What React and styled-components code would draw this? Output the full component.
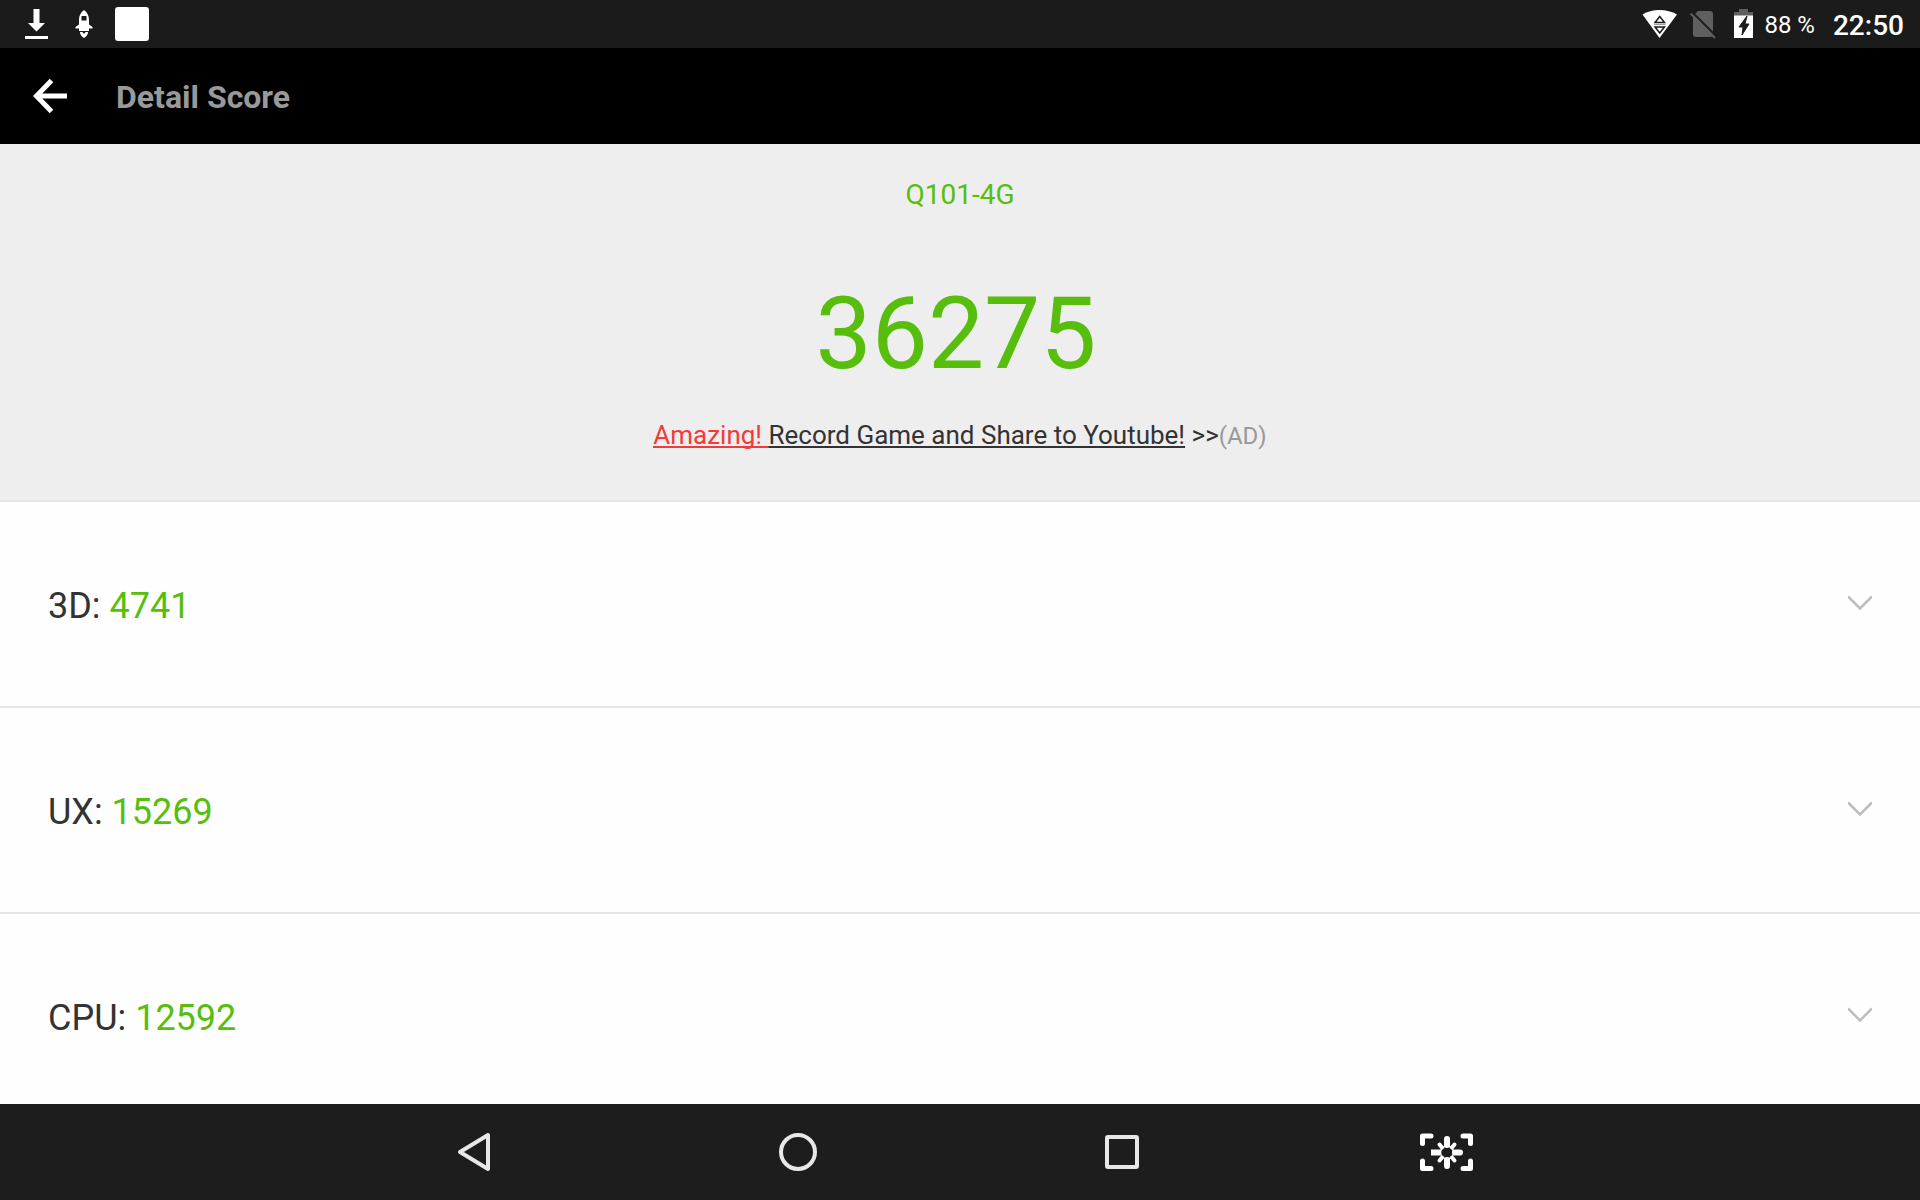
import React, { useState } from "react";
import styled, { createGlobalStyle } from "styled-components";

const GlobalStyle = createGlobalStyle`
  *, *::before, *::after { box-sizing: border-box; }
  body {
    margin: 0;
    background: #fefefe;
    font-family: Roboto, "Noto Sans", sans-serif;
    color: #333333;
  }
`;

const Screen = styled.div`
  display: flex;
  flex-direction: column;
  height: 100vh;
  overflow: hidden;
`;

const StatusBar = styled.div`
  display: flex;
  flex: none;
  align-items: center;
  justify-content: space-between;
  height: 48px;
  padding: 0 16px 0 24px;
  background: #1b1b1b;
  color: #ffffff;
`;

const StatusGroup = styled.div`
  display: flex;
  align-items: center;
  gap: ${(p) => p.$gap}px;
`;

const Glyph = styled.svg`
  display: block;
  flex: none;
`;

const Battery = styled.span`
  padding-top: 2px;
  font-size: 24px;
  line-height: 44px;
`;

const Clock = styled.time`
  margin-left: 8px;
  padding-top: 4px;
  font-size: 28px;
  font-weight: 500;
  line-height: 44px;
`;

const AppBar = styled.header`
  display: flex;
  flex: none;
  align-items: center;
  gap: 32px;
  height: 96px;
  padding: 0 16px;
  background: #000000;
`;

const IconButton = styled.button`
  display: flex;
  align-items: center;
  justify-content: center;
  width: 68px;
  height: 68px;
  padding: 0;
  border: 0;
  background: transparent;
  cursor: pointer;
`;

const Title = styled.h1`
  margin: 0;
  padding-top: 2px;
  font-size: 32px;
  font-weight: 700;
  line-height: 40px;
  color: #999999;
`;

const Content = styled.main`
  flex: 1;
  min-height: 0;
  overflow: hidden;
`;

const Summary = styled.section`
  display: flex;
  flex-direction: column;
  align-items: center;
  padding: 32px 24px 48px;
  border-bottom: 2px solid #e5e5e5;
  background: #eeeeee;
`;

const Model = styled.h2`
  margin: 0;
  font-size: 28px;
  font-weight: 400;
  line-height: 38px;
  color: #57be0d;
`;

const Total = styled.output`
  margin: 62px 0 26px;
  padding-right: 8px;
  font-size: 100px;
  line-height: 116px;
  color: #57be0d;
`;

const Promo = styled.p`
  margin: 0;
  font-size: 26px;
  line-height: 34px;
`;

const PromoLink = styled.a`
  color: #333333;
  text-decoration: underline;
  text-decoration-thickness: 2px;
  text-underline-offset: 2px;
  text-decoration-skip-ink: none;
`;

const Hot = styled.span`
  color: #f43a3a;
  text-decoration: inherit;
`;

const AdTag = styled.small`
  font-size: 24px;
  line-height: 1;
  color: #999999;
`;

const ScoreRow = styled.button`
  display: flex;
  align-items: center;
  justify-content: space-between;
  width: 100%;
  height: 206px;
  padding: 0 48px;
  border: 0;
  border-bottom: 2px solid #e5e5e5;
  background: #fefefe;
  color: #333333;
  font-family: inherit;
  font-size: 36px;
  line-height: 44px;
  text-align: left;
  cursor: pointer;
`;

const Label = styled.span`
  padding-top: 4px;
`;

const Value = styled.span`
  color: #57be0d;
`;

const NavBar = styled.nav`
  display: flex;
  flex: none;
  align-items: center;
  justify-content: center;
  gap: 256px;
  height: 96px;
  background: #1d1d1d;
`;

const scores = [
  { name: "3D", value: 4741 },
  { name: "UX", value: 15269 },
  { name: "CPU", value: 12592 },
];

function DownloadIcon() {
  return (
    <Glyph width="28" height="32" viewBox="0 0 28 32" fill="#fff" aria-hidden="true">
      <path d="M9.500 1h6v14h5.500L12.500 23.500 4 15h5.500zM1 28h23v3H1z" />
    </Glyph>
  );
}

function RocketIcon() {
  return (
    <Glyph width="19" height="32" viewBox="0 0 19 32" aria-hidden="true">
      <path
        d="M10 2C6.500 4.500 5 8 5 12v4.500L1.500 19v1.500H5V23h10v-2.500h3.500V19L15 16.500V12c0-4-1.500-7.500-5-10zM7.500 8h5v4.500h-5z"
        fill="#fff"
        fillRule="evenodd"
      />
      <path d="M6 24h2.500q1.500 3 3 0H14q0 3.500-4 6-4-2.500-4-6z" fill="#fff" />
    </Glyph>
  );
}

function BlankAppIcon() {
  return (
    <Glyph width="34" height="34" viewBox="0 0 34 34" aria-hidden="true">
      <rect width="34" height="34" rx="3" fill="#fff" />
    </Glyph>
  );
}

function WifiIcon() {
  return (
    <Glyph width="38" height="32" viewBox="0 0 38 32" aria-hidden="true">
      <path d="M.5 6.500C5 3.500 11 2 17.500 2s12.500 1.500 17.500 4.500L17.500 30z" fill="#fff" />
      <path d="M13 14.500h9.500L17.750 8.500zM13 19h9.500l-4.750 6z" fill="none" stroke="#1b1b1b" strokeWidth="1.500" />
      <path d="M12 16.500h11.500" stroke="#999" />
    </Glyph>
  );
}

function NoSimIcon() {
  return (
    <Glyph width="34" height="32" viewBox="0 0 34 32" aria-hidden="true">
      <path d="M3 8 8 3h12q3 0 3 3v20q0 3-3 3H6q-3 0-3-3z" fill="#5f5f5f" />
      <path d="M2 4 27 29" stroke="#1b1b1b" strokeWidth="2" />
      <path d="M.5 5.500 25 30" stroke="#5f5f5f" strokeWidth="2" />
    </Glyph>
  );
}

function BatteryIcon() {
  return (
    <Glyph width="20" height="32" viewBox="0 0 20 32" aria-hidden="true">
      <path d="M5 1h9v3h5v4H0V4h5z" fill="#5f5f5f" />
      <path d="M0 7.500h19V30H0z" fill="#fff" />
      <path d="M13 8 5 19h4L8 27l7-11h-4z" fill="#1b1b1b" stroke="#1b1b1b" />
    </Glyph>
  );
}

function ArrowBackIcon() {
  return (
    <Glyph width="36" height="36" viewBox="0 0 36 36" aria-hidden="true">
      <path d="M19.500 2.500 4.500 18l15 15.500M5 18h30" fill="none" stroke="#fff" strokeWidth="5" />
    </Glyph>
  );
}

function ChevronIcon() {
  return (
    <Glyph width="24" height="18" viewBox="0 0 24 18" aria-hidden="true">
      <path d="m0 1.500 12 12 12-12" fill="none" stroke="#bdbdbd" strokeWidth="2.500" />
    </Glyph>
  );
}

function NavBackIcon() {
  return (
    <Glyph width="40" height="40" viewBox="0 0 40 40" aria-hidden="true">
      <path d="M34 3v34L6 20z" fill="none" stroke="#e8e8e8" strokeWidth="4" strokeLinejoin="round" />
    </Glyph>
  );
}

function NavHomeIcon() {
  return (
    <Glyph width="40" height="40" viewBox="0 0 40 40" aria-hidden="true">
      <circle cx="20" cy="20" r="17" fill="none" stroke="#e8e8e8" strokeWidth="4" />
    </Glyph>
  );
}

function NavRecentIcon() {
  return (
    <Glyph width="40" height="40" viewBox="0 0 40 40" aria-hidden="true">
      <rect x="5" y="5" width="30" height="30" rx="1" fill="none" stroke="#e8e8e8" strokeWidth="4" />
    </Glyph>
  );
}

function NavCaptureIcon() {
  return (
    <Glyph width="56" height="40" viewBox="-1 0 56 40" aria-hidden="true">
      <g fill="none" stroke="#fff" strokeLinecap="round" strokeLinejoin="round">
        <path
          d="M3.500 11.500V4H12M44 4h7.500v7.500M51.500 29v7.500H44M12 36.500H3.500V29"
          strokeWidth="5"
        />
        <path d="M28 7v6M28 28v6M36 20.500h5" strokeWidth="6" />
        <path d="M12 20.500h9" strokeWidth="6" strokeLinecap="butt" />
        <path d="m20.500 12.500 2.500 3M35.500 12.500l-2.500 3M20.500 28.500l2.500-3M35.500 28.500l-2.500-3" strokeWidth="4" />
        <circle cx="28" cy="20.500" r="6.500" strokeWidth="1.500" />
      </g>
    </Glyph>
  );
}

export default function App() {
  const [selected, setSelected] = useState(null);
  return (
    <>
      <GlobalStyle />
      <Screen>
        <StatusBar>
          <StatusGroup $gap={22}>
            <DownloadIcon />
            <RocketIcon />
            <BlankAppIcon />
          </StatusGroup>
          <StatusGroup $gap={10}>
            <WifiIcon />
            <NoSimIcon />
            <BatteryIcon />
            <Battery>88 %</Battery>
            <Clock>22:50</Clock>
          </StatusGroup>
        </StatusBar>
        <AppBar>
          <IconButton type="button" aria-label="Back">
            <ArrowBackIcon />
          </IconButton>
          <Title>Detail Score</Title>
        </AppBar>
        <Content>
          <Summary>
            <Model>Q101-4G</Model>
            <Total>36275</Total>
            <Promo>
              <PromoLink href="#record">
                <Hot>Amazing! </Hot>Record Game and Share to Youtube!
              </PromoLink>{" "}
              &gt;&gt;<AdTag>(AD)</AdTag>
            </Promo>
          </Summary>
          {scores.map((s) => (
            <ScoreRow
              key={s.name}
              type="button"
              aria-pressed={selected === s.name}
              onClick={() => setSelected(s.name)}
            >
              <Label>
                {s.name}: <Value>{s.value}</Value>
              </Label>
              <ChevronIcon />
            </ScoreRow>
          ))}
        </Content>
        <NavBar>
          <IconButton type="button" aria-label="Back">
            <NavBackIcon />
          </IconButton>
          <IconButton type="button" aria-label="Home">
            <NavHomeIcon />
          </IconButton>
          <IconButton type="button" aria-label="Recent apps">
            <NavRecentIcon />
          </IconButton>
          <IconButton type="button" aria-label="Screenshot">
            <NavCaptureIcon />
          </IconButton>
        </NavBar>
      </Screen>
    </>
  );
}
